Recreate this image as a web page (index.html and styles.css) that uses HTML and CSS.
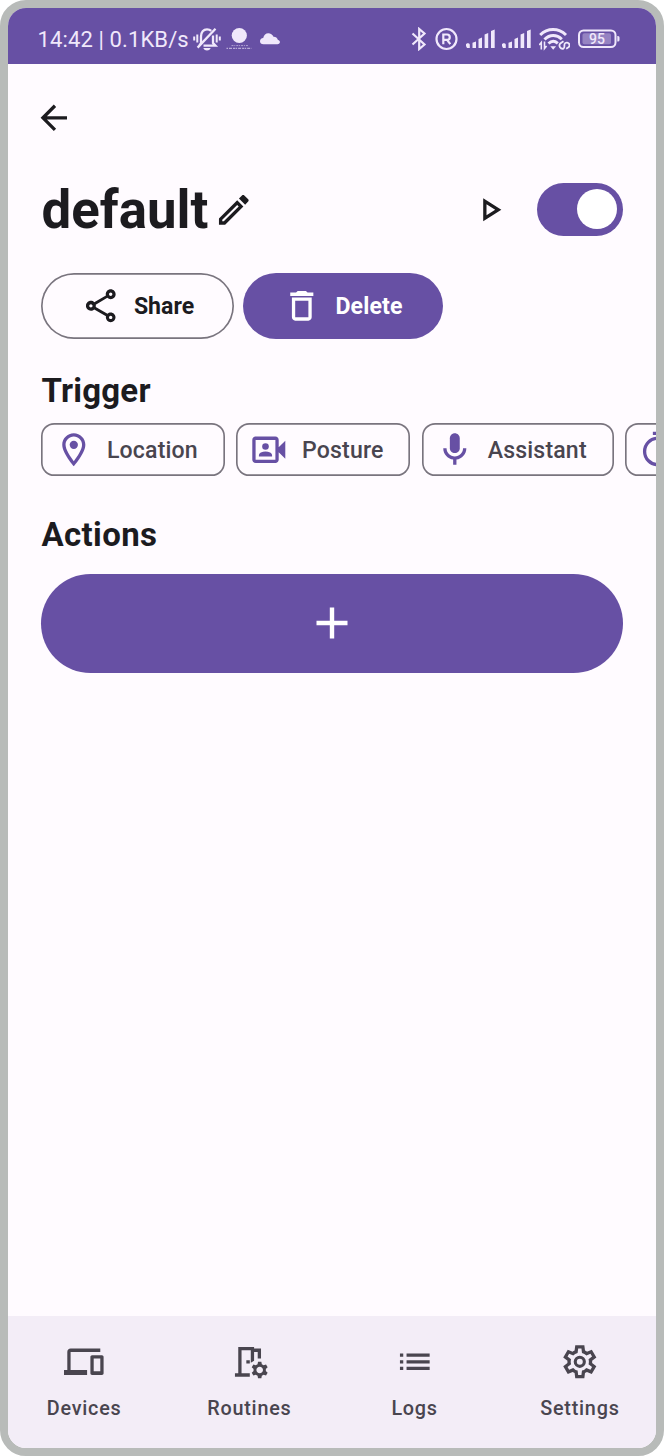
FILE: index.html
```html
<!DOCTYPE html>
<html lang="en">
<head>
<meta charset="utf-8">
<title>Routine</title>
<link rel="stylesheet" href="styles.css">
</head>
<body>
<div class="phone">
  <header class="status">
    <span class="status-text">14:42 | 0.1KB/s</span>
    <svg class="st-bell" width="28" height="24" viewBox="0 0 28 24" fill="none" stroke="currentColor" stroke-width="2.300">
      <path d="M6.500 18.500L8 16V9.500C8 5 10.500 2.300 14 2.300c1.800 0 3.200.6 4.200 1.600M20 8.500V16l2.500 2.700H10.500"/>
      <path d="M4.600 20.600L22.500 1.800"/>
      <path d="M1.200 9.500v4M4.300 7.500v8M23.700 7.500v8M26.800 9.500v4" stroke-width="2"/>
      <path d="M10.300 21h7.400c-1 1.800-2 2.500-3.700 2.500s-2.700-.7-3.700-2.500z" fill="currentColor" stroke="none"/>
    </svg>
    <svg class="st-dot" width="26" height="24" viewBox="0 0 26 24" fill="none" stroke="currentColor">
      <circle cx="13.300" cy="8.500" r="7.600" fill="currentColor" stroke="none"/>
      <path d="M5.500 18.600h17" stroke-dasharray="2 .8 1 1" opacity=".55"/>
      <path d="M.5 21.300h25" stroke-dasharray="1.500 1 3 1 2 .6" opacity=".75"/>
    </svg>
    <svg class="st-cloud" width="20" height="24" viewBox="0 0 20 24" fill="currentColor">
      <path d="M3.500 17.200C1.300 17.200 0 16 0 14.200c0-1.700 1.300-3 3.200-3.200C3.900 8 5.800 6.300 8.300 6.300c2.300 0 4.200 1.200 5.200 3.400 2.200-.1 3.700 1 4.300 3 1.400.4 2.100 1.300 2.100 2.400 0 1.300-1 2.100-2.400 2.100z"/>
    </svg>
    <span class="spacer"></span>
    <svg class="st-bt" width="16" height="24" viewBox="0 0 16 24" fill="none" stroke="currentColor" stroke-width="2.200">
      <path d="M1.500 6.500l12 11L8.200 22V2l5.300 4.500-12 11"/>
    </svg>
    <svg class="st-r" width="23" height="24" viewBox="0 0 23 24" fill="none" stroke="currentColor" stroke-width="2.200">
      <circle cx="11.500" cy="12" r="10"/>
      <path d="M8.300 17.200V7.500h3.800a2.600 2.600 0 0 1 0 5.300H8.300M12 12.800l3.300 4.400"/>
    </svg>
    <svg class="st-sig" width="29" height="24" viewBox="0 0 29 24" fill="currentColor">
      <path d="M0 19a2 2 0 0 1 3.800-1.500V21H1zM6.500 15.700l3.500-1.200V21H6.500zM12.500 12l3.500-1.500V21h-3.500zM18.600 7.500L22.200 6v15h-3.600zM25 4l3.700-1.500V21H25z"/>
    </svg>
    <svg class="st-sig" width="29" height="24" viewBox="0 0 29 24" fill="currentColor">
      <path d="M0 19a2 2 0 0 1 3.800-1.500V21H1zM6.500 15.700l3.500-1.200V21H6.500zM12.500 12l3.500-1.500V21h-3.500zM18.600 7.500L22.200 6v15h-3.600zM25 4l3.700-1.500V21H25z"/>
    </svg>
    <svg class="st-wifi" width="31" height="24" viewBox="0 0 31 24" fill="none" stroke="currentColor" stroke-width="3">
      <path d="M1.200 8C8.500.8 19.500.8 27 8"/>
      <path d="M5.500 12.500c5.200-5.200 12.200-5.200 17.300-.2"/>
      <path d="M9.500 16.500c2.800-2.700 6.300-2.800 9.300-.2"/>
      <path d="M11.300 19.200h5.800L14.200 22.800z" fill="currentColor" stroke="none"/>
      <path d="M2.300 22.500v-7L.2 18M5.500 14.500v7l2.100-2.500" stroke-width="1.600"/>
      <path d="M24.500 14.300l-3.200 2.100a3.200 3.200 0 0 0 3.200 5.200c2-1.200-.2-4 1.700-5.500a2.600 2.600 0 0 1 3.200 4.200l-2.200 1.500" stroke-width="1.800"/>
    </svg>
    <svg class="st-bat" width="42" height="20" viewBox="0 0 42 20" fill="none">
      <rect x="1" y="1.500" width="36.500" height="16.500" rx="4.500" stroke="currentColor" stroke-width="2"/>
      <rect x="4.500" y="4.300" width="28.500" height="11" rx="1.800" fill="#9683c2"/>
      <path d="M39.300 7h.7a1.500 1.500 0 0 1 1.500 1.500V11a1.500 1.500 0 0 1-1.500 1.500h-.7z" fill="currentColor"/>
      <text class="bat-num" x="19" y="14.800" text-anchor="middle" fill="currentColor">95</text>
    </svg>
  </header>

  <main class="content">
    <svg class="icon back" viewBox="0 0 24 24"><path d="M20 11H7.830l5.590-5.590L12 4l-8 8 8 8 1.410-1.410L7.830 13H20v-2z"/></svg>

    <div class="title-row">
      <h1 class="title">default</h1>
      <svg class="icon edit" viewBox="0 0 24 24"><path d="M14.060 9.020l.92.92L5.920 19H5v-.92l9.060-9.060M17.660 3c-.25 0-.51.1-.7.29l-1.830 1.830 3.750 3.750 1.830-1.830c.39-.39.39-1.020 0-1.410l-2.340-2.340c-.2-.2-.45-.29-.71-.29zm-3.600 3.190L3 17.250V21h3.750L17.810 9.940l-3.750-3.750z"/></svg>
      <span class="spacer"></span>
      <svg class="icon play" viewBox="0 0 24 24"><path d="M10 8.640L15.270 12 10 15.360V8.640M8 5v14l11-7L8 5z"/></svg>
      <div class="switch"><div class="thumb"></div></div>
    </div>

    <div class="buttons">
      <div class="btn share">
        <svg class="icon" viewBox="0 0 24 24"><path d="M18 16.080c-.76 0-1.440.3-1.960.77L8.910 12.700c.05-.23.09-.46.09-.7s-.04-.47-.09-.7l7.050-4.110c.54.5 1.250.81 2.040.81 1.660 0 3-1.340 3-3s-1.340-3-3-3-3 1.340-3 3c0 .24.04.47.09.7L8.040 9.810C7.500 9.310 6.790 9 6 9c-1.660 0-3 1.340-3 3s1.340 3 3 3c.79 0 1.500-.31 2.040-.81l7.120 4.160c-.05.21-.08.43-.08.65 0 1.610 1.310 2.920 2.920 2.920s2.920-1.310 2.920-2.920-1.310-2.920-2.920-2.920zM18 4c.55 0 1 .45 1 1s-.45 1-1 1-1-.45-1-1 .45-1 1-1zM6 13c-.55 0-1-.45-1-1s.45-1 1-1 1 .45 1 1-.45 1-1 1zm12 7.020c-.55 0-1-.45-1-1s.45-1 1-1 1 .45 1 1-.45 1-1 1z"/></svg>
        <span>Share</span>
      </div>
      <div class="btn delete">
        <svg class="icon" viewBox="0 0 24 24"><path d="M6 19c0 1.100.9 2 2 2h8c1.100 0 2-.9 2-2V7H6v12zM8 9h8v10H8V9zm7.500-5l-1-1h-5l-1 1H5v2h14V4h-3.500z"/></svg>
        <span>Delete</span>
      </div>
    </div>

    <h2 class="heading trigger">Trigger</h2>
    <div class="chips">
      <div class="chip">
        <svg class="icon" viewBox="0 0 24 24"><path d="M12 2C8.130 2 5 5.130 5 9c0 5.250 7 13 7 13s7-7.750 7-13c0-3.870-3.130-7-7-7zM7 9c0-2.760 2.240-5 5-5s5 2.240 5 5c0 2.880-2.880 7.190-5 9.880C9.920 16.210 7 11.850 7 9z"/><circle cx="12" cy="9" r="2.500"/></svg>
        <span>Location</span>
      </div>
      <div class="chip">
        <svg class="icon" viewBox="0 0 24 24"><path d="M18 10.480V6c0-1.100-.9-2-2-2H4c-1.100 0-2 .9-2 2v12c0 1.100.9 2 2 2h12c1.100 0 2-.9 2-2v-4.480l4 3.980v-11l-4 3.980zM16 18H4V6h12v12z"/><circle cx="10" cy="10" r="2"/><path d="M14 15.430c0-.81-.48-1.530-1.220-1.850-.85-.37-1.790-.58-2.780-.58s-1.930.21-2.780.58C6.480 13.900 6 14.620 6 15.430V16h8v-.57z"/></svg>
        <span>Posture</span>
      </div>
      <div class="chip">
        <svg class="icon" viewBox="0 0 24 24"><path d="M12 14c1.660 0 3-1.340 3-3V5c0-1.660-1.340-3-3-3S9 3.340 9 5v6c0 1.660 1.340 3 3 3z"/><path d="M17 11c0 2.760-2.240 5-5 5s-5-2.240-5-5H5c0 3.530 2.610 6.430 6 6.920V21h2v-3.080c3.390-.49 6-3.390 6-6.920h-2z"/></svg>
        <span>Assistant</span>
      </div>
      <div class="chip">
        <svg class="icon" viewBox="0 0 24 24"><path d="M9 1h6v2H9zM11 8h2v6h-2z"/><circle cx="12" cy="13" r="8" fill="none" stroke="currentColor" stroke-width="2"/></svg>
      </div>
    </div>

    <h2 class="heading actions">Actions</h2>
    <div class="add">
      <svg width="32" height="32" viewBox="0 0 32 32"><path d="M16 .5v31M.5 16h31" stroke="currentColor" stroke-width="4.400"/></svg>
    </div>
  </main>

  <nav class="nav">
    <div class="nav-item">
      <svg class="icon" viewBox="0 0 24 24"><path d="M4 6h18V4H4c-1.100 0-2 .9-2 2v11H0v3h14v-3H4V6zm19 2h-6c-.55 0-1 .45-1 1v10c0 .55.45 1 1 1h6c.55 0 1-.45 1-1V9c0-.55-.45-1-1-1zm-1 9.800h-4V10h4v7.800z"/></svg>
      <span>Devices</span>
    </div>
    <div class="nav-item">
      <svg class="icon" viewBox="0 0 24 24"><path d="M5 3h9.600v1h4.200v6h-2V6h-2.200v5.300l-2 1.300V5H7v14h5v2H3v-2h2zM9.900 11H12v2H9.900z"/><path d="M21.690 16.370l1.140-1-1-1.730-1.450.49c-.32-.27-.68-.48-1.080-.63L19 12h-2l-.3 1.490c-.4.15-.76.36-1.080.63l-1.450-.49-1 1.730 1.140 1c-.08.5-.08.76 0 1.260l-1.140 1 1 1.730 1.450-.49c.32.27.68.48 1.080.63L17 22h2l.3-1.490c.4-.15.76-.36 1.080-.63l1.450.49 1-1.730-1.140-1c.08-.51.08-.77 0-1.270zM18 19c-1.100 0-2-.9-2-2s.9-2 2-2 2 .9 2 2-.9 2-2 2z"/></svg>
      <span>Routines</span>
    </div>
    <div class="nav-item">
      <svg class="icon" viewBox="0 0 24 24"><path d="M3 13h2v-2H3v2zm0 4h2v-2H3v2zm0-8h2V7H3v2zm4 4h14v-2H7v2zm0 4h14v-2H7v2zM7 7v2h14V7H7z"/></svg>
      <span>Logs</span>
    </div>
    <div class="nav-item">
      <svg class="icon" viewBox="0 -960 960 960"><path fill-rule="evenodd" d="m370-80-16-128q-13-5-24.500-12T307-235l-119 50L78-375l103-78q-1-7-1-13.500v-27q0-6.500 1-13.500L78-585l110-190 119 50q11-8 23-15t24-12l16-128h220l16 128q13 5 24.500 12t22.500 15l119-50 110 190-103 78q1 7 1 13.500v27q0 6.500-2 13.500l103 78-110 190-118-50q-11 8-23 15t-24 12L590-80H370Zm70-80h79l14-106q31-8 57.500-23.500T639-327l99 41 39-68-86-65q5-14 7-29.500t2-31.500q0-16-2-31.500t-7-29.500l86-65-39-68-99 42q-22-23-48.500-38.500T533-694l-13-106h-79l-14 106q-31 8-57.500 23.500T321-633l-99-41-39 68 86 64q-5 15-7 30t-2 32q0 16 2 31t7 30l-86 65 39 68 99-42q22 23 48.500 38.500T427-266l13 106Z"/><circle cx="480" cy="-480" r="110" fill="none" stroke="currentColor" stroke-width="76"/></svg>
      <span>Settings</span>
    </div>
  </nav>
</div>
</body>
</html>
```

FILE: styles.css
```css
* { box-sizing: border-box; }

body {
  margin: 0;
  background: #fff;
  font-family: Roboto, "Liberation Sans", sans-serif;
  color: #1c1b1f;
}

.phone {
  width: 664px;
  height: 1456px;
  border: 8px solid #b8bbb9;
  border-radius: 26px;
  background: #fffbff;
  display: flex;
  flex-direction: column;
  overflow: hidden;
}

.spacer { flex: 1; }

.icon {
  display: block;
  flex: none;
  width: 39.6px;
  height: 39.6px;
  fill: currentColor;
}

/* Status bar */
.status {
  flex: none;
  height: 56.400px;
  padding: 6px 36.500px 0 29.500px;
  display: flex;
  align-items: center;
  background: #6750a4;
  color: #f0e8fb;
}
.status svg { flex: none; display: block; }
.status-text {
  width: 151px;
  font-size: 22px;
  line-height: 26px;
  letter-spacing: .12px;
  padding-top: 1px;
  white-space: nowrap;
}
.st-bell { margin-left: 4px; }
.st-dot { margin-left: 5.500px; }
.st-cloud { margin-left: 8px; }
.st-r { margin-left: 8px; }
.st-sig { margin-left: 8px; }
.st-sig + .st-sig { margin-left: 7px; }
.st-wifi { margin-left: 8px; }
.st-bat { margin-left: 8px; }
.bat-num { font-size: 14px; font-weight: 500; }

/* Main screen */
.content {
  flex: 1;
  padding: 33.500px 33px 0;
}
.back { margin-left: -6.700px; }

.title-row {
  height: 53px;
  margin-top: 45.500px;
  display: flex;
  align-items: center;
}
.title {
  margin: 0;
  width: 172.500px;
  padding: 2px 0 0 .5px;
  font-size: 52.800px;
  line-height: 53px;
  font-weight: 700;
  white-space: nowrap;
}
.play { margin-right: 27.800px; }
.switch {
  width: 86px;
  height: 53px;
  padding-right: 6.500px;
  border-radius: 27px;
  background: #6750a4;
  display: flex;
  align-items: center;
  justify-content: flex-end;
}
.thumb {
  width: 40px;
  height: 40px;
  border-radius: 50%;
  background: #fff;
}

.buttons {
  display: flex;
  gap: 8.500px;
  margin-top: 36.800px;
}
.btn {
  height: 66px;
  border-radius: 33px;
  display: flex;
  align-items: center;
  gap: 13.500px;
  padding-left: 39.800px;
  font-size: 23.100px;
  font-weight: 700;
  white-space: nowrap;
}
.btn span { padding-top: 2px; }
.share { width: 193px; box-shadow: inset 0 0 0 1.650px #79747e; }
.delete {
  width: 200.500px;
  background: #6750a4;
  color: #fff;
  letter-spacing: .15px;
}

.heading {
  margin: 0;
  padding-left: .5px;
  font-size: 33px;
  line-height: 40px;
  font-weight: 700;
  letter-spacing: .2px;
}
.trigger { margin-top: 32.700px; }
.actions { margin-top: 39px; letter-spacing: .35px; }

.chips {
  display: flex;
  gap: 11.400px;
  margin: 11.500px -33px 0 0;
  overflow: hidden;
}
.chip {
  flex: none;
  height: 53px;
  padding: 0 26.800px 0 13.200px;
  box-shadow: inset 0 0 0 1.650px #79747e;
  border-radius: 13.200px;
  display: flex;
  align-items: center;
  gap: 13.200px;
  font-size: 23.100px;
  font-weight: 500;
  letter-spacing: .16px;
  color: #49454f;
}
.chip .icon { color: #6750a4; }
.chip span { padding-top: 2.500px; }

.add {
  height: 99px;
  margin-top: 19px;
  border-radius: 50px;
  background: #6750a4;
  color: #fff;
  display: flex;
  align-items: center;
  justify-content: center;
}
.add svg { display: block; }

/* Bottom navigation */
.nav {
  flex: none;
  height: 132px;
  padding-top: 26.300px;
  display: flex;
  gap: 13px;
  background: #f3edf7;
  color: #49454f;
}
.nav-item {
  flex: 1 1 0;
  display: flex;
  flex-direction: column;
  align-items: center;
  gap: 13.700px;
  font-size: 19.800px;
  line-height: 26px;
  font-weight: 500;
  letter-spacing: .78px;
}
```
